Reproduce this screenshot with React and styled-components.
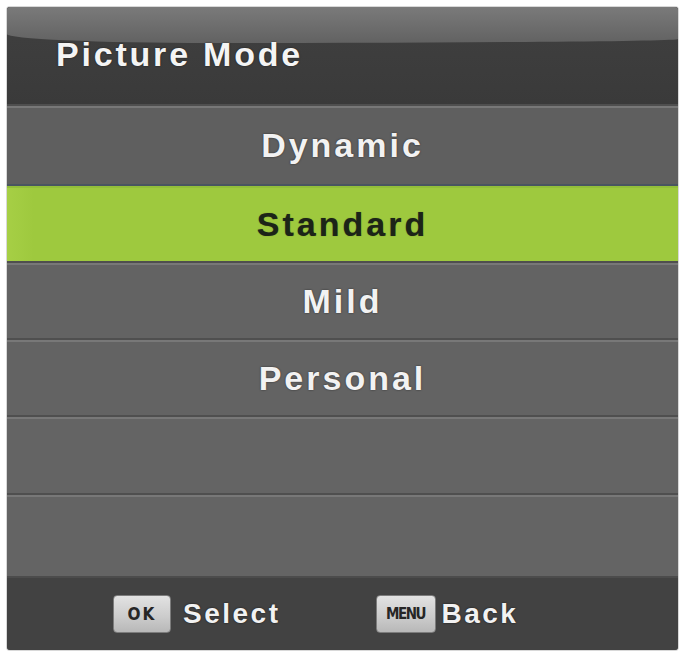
import React from 'react';
import styled, { createGlobalStyle } from 'styled-components';

const GlobalStyle = createGlobalStyle`
  body {
    margin: 0;
    background: #fff;
    font-family: "Liberation Sans", Arial, sans-serif;
  }
`;

const Screen = styled.div`
  width: 684px;
  height: 653px;
  padding: 7px 6px 3px 7px;
  box-sizing: border-box;
`;

const Panel = styled.div`
  height: 643px;
  display: flex;
  flex-direction: column;
  background: #636363;
  border-radius: 3px;
  overflow: hidden;
  box-shadow: 0 0 0 1px #d8d8d8;
`;

const Header = styled.header`
  position: relative;
  height: 97px;
  flex: none;
  background: linear-gradient(#404040, #3a3a3a);
  padding: 30px 0 0 49px;
  box-sizing: border-box;

  &::before {
    content: "";
    position: absolute;
    left: 0;
    right: 0;
    top: 0;
    height: 36px;
    background: linear-gradient(#7a7a7a, #626262);
    border-radius: 0 0 70% 30% / 0 0 4px 9px;
  }
`;

const Title = styled.h1`
  position: relative;
  margin: 0;
  font-size: 34px;
  line-height: 34px;
  font-weight: bold;
  letter-spacing: 2.8px;
  color: #f4f4f4;
  text-shadow: 0 0 2px rgba(0, 0, 0, 0.6);
`;

const Row = styled.div`
  height: ${ p => p.$h }px;
  flex: none;
  display: flex;
  align-items: center;
  justify-content: center;
  box-sizing: border-box;
  padding-top: 3px;
  background: ${ p => p.$active ? 'linear-gradient(90deg, #a6cf45, #9ec93e 4%, #9ec93e)' : p.$tone };
  box-shadow: inset 0 2px 0 ${ p => p.$active ? '#4a5560' : '#4f4f4f' },
              inset 0 4px 0 ${ p => p.$active ? '#93bf3a' : '#787878' };
  font-size: 34px;
  font-weight: bold;
  letter-spacing: 3px;
  color: ${ p => p.$active ? '#1c2418' : '#f2f2f2' };
  text-shadow: ${ p => p.$active ? '0 0 1px rgba(0,0,0,0.4)' : '0 0 2px rgba(0,0,0,0.6)' };
`;

const Footer = styled.footer`
  flex: 1;
  display: flex;
  align-items: center;
  padding: 1px 0 0 106px;
  background: #424242;
  box-shadow: inset 0 2px 0 #4c4c4c;
`;

const Hint = styled.div`
  display: flex;
  align-items: center;
  gap: ${ p => p.$gap }px;
  margin-right: ${ p => p.$space || 0 }px;
`;

const Key = styled.span`
  width: ${ p => p.$w }px;
  height: 38px;
  display: flex;
  align-items: center;
  justify-content: center;
  box-sizing: border-box;
  border-radius: 4px;
  border: 1px solid #7c7c7c;
  background: linear-gradient(#e2e2e2, #cdcdcd 55%, #b8b8b8);
  font-family: "DejaVu Sans Condensed", "Liberation Sans", sans-serif;
  font-weight: bold;
  font-size: ${ p => p.$size }px;
  letter-spacing: ${ p => p.$ls }px;
  color: #262626;
`;

const Label = styled.span`
  font-size: 28px;
  font-weight: bold;
  letter-spacing: 2.5px;
  color: #f2f2f2;
  text-shadow: 0 0 2px rgba(0, 0, 0, 0.7);
`;

const modes = [
    { name: 'Dynamic', h: 80, tone: '#5f5f5f' },
    { name: 'Standard', h: 77, active: true },
    { name: 'Mild', h: 77, tone: '#636363' },
    { name: 'Personal', h: 77, tone: '#636363' },
    { name: '', h: 78, tone: '#646464' },
    { name: '', h: 83, tone: '#646464' },
];

export default function App ()
{
    return (
        <>
            <GlobalStyle />
            <Screen>
                <Panel>
                    <Header>
                        <Title>Picture Mode</Title>
                    </Header>

                    { modes.map( ( m, i ) => (
                        <Row key={ i } $h={ m.h } $active={ m.active } $tone={ m.tone }>
                            { m.name }
                        </Row>
                    ) ) }

                    <Footer>
                        <Hint $gap={ 12 } $space={ 95 }>
                            <Key $w={ 58 } $size={ 17 } $ls={ 2 }>OK</Key>
                            <Label>Select</Label>
                        </Hint>
                        <Hint $gap={ 6 }>
                            <Key $w={ 60 } $size={ 15 } $ls={ -1.5 }>MENU</Key>
                            <Label>Back</Label>
                        </Hint>
                    </Footer>
                </Panel>
            </Screen>
        </>
    );
}
